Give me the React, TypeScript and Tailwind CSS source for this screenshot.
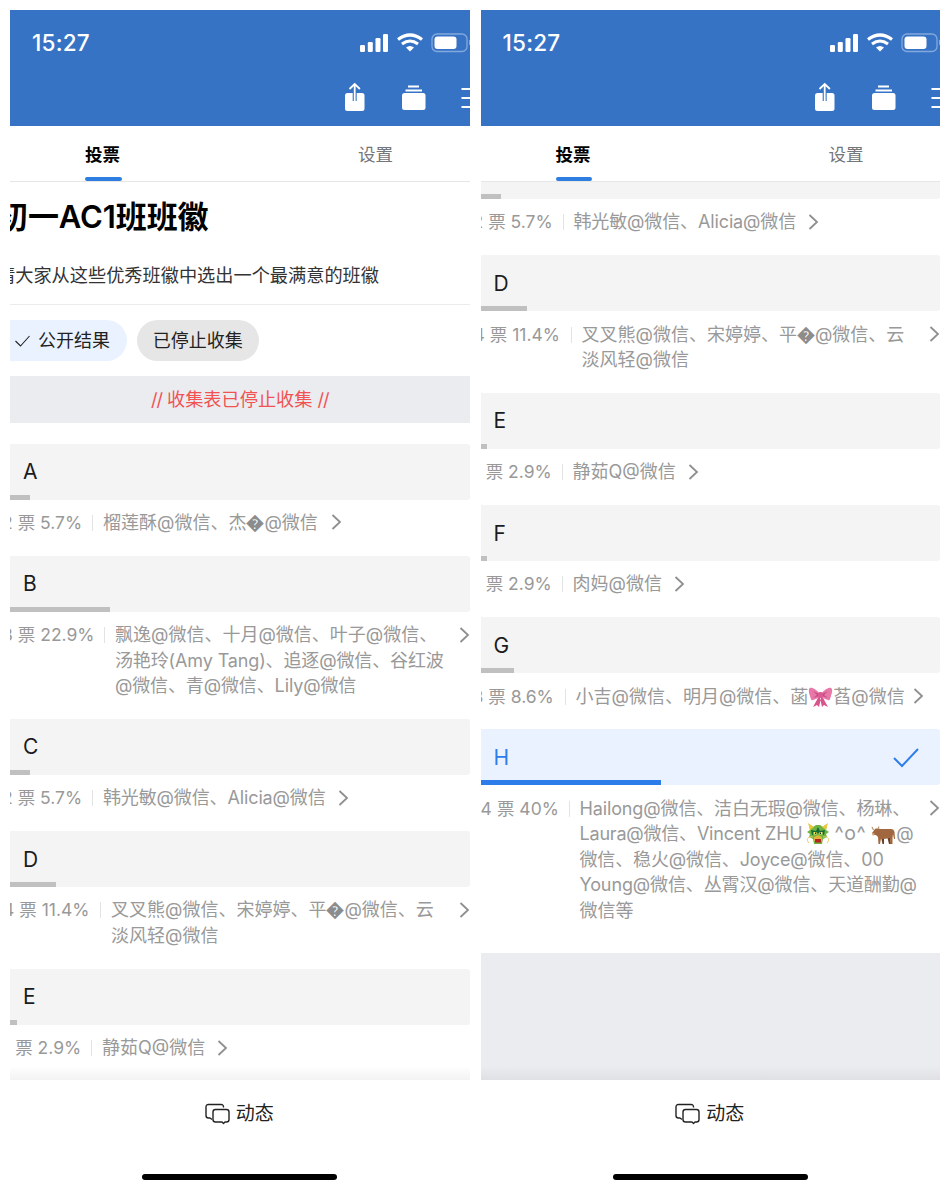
import React from "react";

type Vote = {
  label: string;
  bar: string;
  count: string;
  share: string;
  indent: string;
  column: string;
  lines: React.ReactNode[];
  chevron: string;
  selected?: boolean;
};

const Unknown = () => <span className="inline-block w-[18px] text-center text-[18px] leading-none font-black text-[#8c8c8c]">�</span>;

const Bow = () => (
  <svg className="inline-block h-[22px] w-[25px] align-[-5px]" viewBox="0 0 25 22">
    <path d="M11 10 5 21l4-2 2 2 2-9zM14 10l6 11-4-2-2 2-2-9z" fill="#d7558d" />
    <path d="M12 8C9 4 4 1 2 2S1 7 2 10s1 5 3 4 5-1 7-4zM13 8c3-4 8-7 10-6s1 5 0 8-1 5-3 4-5-1-7-4z" fill="#e878a8" />
    <path d="m11 8-6-3 4 4-4 3 6-2zM14 8l6-3-4 4 4 3-6-2z" fill="#c94a82" />
    <rect x="10" y="6" width="5" height="6" rx="2" fill="#d95b92" />
  </svg>
);

const Dragon = () => (
  <svg className="inline-block h-[22px] w-[24px] align-[-5px]" viewBox="0 0 24 22">
    <path d="M3 1 7 4l3-2h4l3 2 4-3-1 6 3 2-3 2 1 3-4 2-1 5H8l-1-5-4-2 1-3-3-2 3-2z" fill="#6fb441" />
    <path d="m2 0 2 7 4-3zM22 0l-2 7-4-3z" fill="#e9c83c" />
    <path d="m5 7 5 1 2-4 2 4 5-1-1 5-6-2-6 2z" fill="#176c35" />
    <path d="M7.5 9h3v2.500h-3zM13.5 9h3v2.500h-3z" fill="#f5e95b" />
    <path d="M9 9.5h1V11H9zM14 9.5h1V11h-1z" fill="#222" />
    <path d="m8 14 4-2 4 2v4H8z" fill="#e0b53a" />
    <path d="M9 16h6v3.500H9z" fill="#b9231f" />
    <path d="M7 14c-6-1-7 3-4 6M17 14c6-1 7 3 4 6" fill="none" stroke="#e3ce63" />
  </svg>
);

const Ox = () => (
  <svg className="inline-block h-[20px] w-[25px] align-[-5px]" viewBox="0 0 25 20">
    <path d="M16 11h3l1 8h-2zM10 12h3v7h-1.500z" fill="#6d4028" />
    <path d="M4 4c2-1 4 0 6 0h10c2 0 3 1 3.500 3l.5 7h-1l-1-5-.5 4v6h-2l-.5-6-6 1-3-.5-1 5.500H7.500L7 12 5 10H2L1 8z" fill="#a1683f" />
    <path d="M2.500 5 1 2M7 4l1-2.500" stroke="#b39a78" strokeWidth="1.2" />
    <path d="m1 8 2.500.5L3 10.500H1.500z" fill="#d8aa88" />
  </svg>
);

const voteA: Vote = {
  label: "A", bar: "w-[20px]", count: "2", share: "票 5.7%", indent: "-ml-[8px]", column: "w-[84px]",
  lines: [<>榴莲酥@微信、杰<Unknown />@微信</>], chevron: "ml-[8.5px] translate-x-[5px] -ml-px",
};
const voteB: Vote = {
  label: "B", bar: "w-[100px]", count: "8", share: "票 22.9%", indent: "-ml-[8px]", column: "w-[96px]",
  lines: ["飘逸@微信、十月@微信、叶子@微信、", "汤艳玲(Amy Tang)、追逐@微信、谷红波", "@微信、青@微信、Lily@微信"], chevron: "ml-auto mr-0",
};
const voteC: Vote = {
  label: "C", bar: "w-[20px]", count: "2", share: "票 5.7%", indent: "-ml-[8px]", column: "w-[84px]",
  lines: ["韩光敏@微信、Alicia@微信"], chevron: "ml-[12px]",
};
const voteD: Vote = {
  label: "D", bar: "w-[46px]", count: "4", share: "票 11.4%", indent: "-ml-[7px]", column: "w-[91px]",
  lines: [<>叉叉熊@微信、宋婷婷、平<Unknown />@微信、云</>, "淡风轻@微信"], chevron: "ml-auto mr-0",
};
const voteE: Vote = {
  label: "E", bar: "w-[6.5px]", count: "1", share: "票 2.9%", indent: "-ml-[7px]", column: "w-[82px]",
  lines: ["静茹Q@微信"], chevron: "ml-[12px]",
};
const voteF: Vote = { ...voteE, label: "F", lines: ["肉妈@微信"] };
const voteG: Vote = {
  label: "G", bar: "w-[33px]", count: "3", share: "票 8.6%", indent: "-ml-[8px]", column: "w-[86px]",
  lines: [<>小吉@微信、明月@微信、菡<Bow />萏@微信</>], chevron: "ml-[8.5px]",
};
const voteH: Vote = {
  label: "H", bar: "w-[180.5px]", count: "14", share: "票 40%", indent: "-ml-[7px]", column: "w-[89px]",
  lines: [
    "Hailong@微信、洁白无瑕@微信、杨琳、",
    <><span className="tracking-[-0.2px]">Laura@微信、Vincent ZHU</span><span className="ml-[3px]"><Dragon /></span><span className="ml-[5px] text-[19.5px] leading-none tracking-[0.5px]">^o^</span><span className="ml-[5px]"><Ox />@</span></>,
    "微信、稳火@微信、Joyce@微信、00",
    "Young@微信、丛霄汉@微信、天道酬勤@",
    "微信等",
  ],
  chevron: "ml-auto mr-0", selected: true,
};

const Chevron = ({ className }: { className: string }) => (
  <svg className={`mt-[4.500px] h-4 w-[11px] shrink-0 ${className}`} viewBox="0 0 11 16" fill="none" stroke="#8f8f8f" strokeWidth="1.8">
    <path d="m1.5 1 7.5 7-7.5 7" />
  </svg>
);

function Details({ vote }: { vote: Vote }) {
  return (
    <div className="flex items-start pt-[10.4px] pb-[20.3px] text-[17.5px] leading-[25.5px] whitespace-nowrap text-[#999]">
      <div className={`flex shrink-0 gap-[5px] ${vote.indent} ${vote.column}`}>
        <span>{vote.count}</span>
        <span>{vote.share}</span>
      </div>
      <span className="mt-[5px] ml-[6px] h-4 w-px shrink-0 bg-[#e3e3e3]" />
      <div className="ml-[10px] text-[18px]">
        {vote.lines.map((line, i) => (
          <div key={i} className={`h-[25.5px] ${typeof line === "string" && /[A-Za-z]{3}/.test(line) ? "tracking-[-0.13px]" : ""}`}>{line}</div>
        ))}
      </div>
      <Chevron className={vote.chevron} />
    </div>
  );
}

function Option({ vote }: { vote: Vote }) {
  return (
    <div>
      <div className={`flex h-14 flex-col justify-between rounded-r-[3px] ${vote.selected ? "bg-[#ebf2ff] text-[#2d7ee8]" : "bg-[#f4f4f4] text-[#1c1c1c]"}`}>
        <div className="flex h-[51px] items-center justify-between pt-[5.5px] pr-[21px] pl-[13px] text-[21px]">
          {vote.label}
          {vote.selected && (
            <svg className="h-5 w-[26px]" viewBox="0 0 26 20" fill="none" stroke="currentColor" strokeWidth="2"><path d="m1 10 8 8L25 1" /></svg>
          )}
        </div>
        <div className={`h-[5px] ${vote.bar} ${vote.selected ? "bg-[#2c7de9]" : "bg-[#c0c0c0]"}`} />
      </div>
      <Details vote={vote} />
    </div>
  );
}

function Header() {
  return (
    <header className="flex h-[116px] shrink-0 flex-col overflow-hidden bg-[#3773c5] text-white">
      <div className="flex h-[64px] items-center pl-[22px] text-[22.5px] font-medium tracking-[0.2px]">
        <span className="pt-[2px]">15:27</span>
        <svg className="ml-auto h-[24px] w-[112px] shrink-0" viewBox="0 0 112 24" fill="white">
          <rect x="2" y="15" width="5" height="7" rx="1.2" /><rect x="9.8" y="12" width="5" height="10" rx="1.2" />
          <rect x="17.5" y="8" width="5" height="14" rx="1.2" /><rect x="25" y="4" width="5" height="18" rx="1.2" />
          <path d="M40 9.5q12-9 24 0" fill="none" stroke="white" strokeWidth="3.2" />
          <path d="M44 14q8-6 16 0" fill="none" stroke="white" strokeWidth="3" />
          <path d="m48 17.5 4 4 4-4q-4-3-8 0" />
          <rect x="74" y="4" width="35" height="17.5" rx="5" fill="none" stroke="#82a9dd" strokeWidth="1.3" />
          <rect x="76.5" y="6.5" width="22" height="12.5" rx="3" />
          <path d="M111 10v5c1 0 2-1 2-2.5s-1-2.5-2-2.5" fill="#82a9dd" />
        </svg>
      </div>
      <div className="flex items-start pt-[7px]">
        <svg className="ml-auto h-[32px] w-[128px]" viewBox="0 0 128 32" fill="white">
          <rect x="3" y="12" width="19.5" height="18" rx="2.5" />
          <path d="M12.7 11v9" fill="none" stroke="#3773c5" strokeWidth="4" />
          <path d="M12.7 20V3M7.5 8l5.2-5 5.2 5" fill="none" stroke="white" strokeWidth="1.8" />
          <rect x="60" y="12" width="23.5" height="17" rx="2.5" />
          <path d="M63.5 9.5h16.500M66 5.500h11M119.500 8h13M119.500 17h13M119.500 26h13" stroke="white" strokeWidth="1.8" />
        </svg>
      </div>
    </header>
  );
}

function Tabs() {
  return (
    <nav className="flex h-[56px] shrink-0 items-stretch border-b border-[#e6e6e6] bg-white text-[17.5px]">
      <div className="ml-[75px] flex w-[36.5px] flex-col justify-between font-bold text-black">
        <span className="pt-[16px] leading-[26px] whitespace-nowrap">投票</span>
        <span className="h-1 rounded-full bg-[#2e7de1]" />
      </div>
      <span className="ml-[236.5px] pt-[16px] leading-[26px] text-[#73767a]">设置</span>
    </nav>
  );
}

function Footer() {
  return (
    <footer className="flex h-[110px] shrink-0 flex-col items-center bg-white">
      <div className="flex h-[67px] items-center gap-[6px] pr-px text-[19px] text-[#222]">
        <svg className="h-[22px] w-[25px]" viewBox="0 0 25 22" fill="none" stroke="currentColor" strokeWidth="1.4" strokeLinejoin="round">
          <path d="M18.5 4.5V4q0-2.5-2.5-2.5H3.5Q1 1.5 1 4v8.5q0 2.5 2.5 2.5H5l2 1.5" />
          <path d="M10.5 6.5h11q2.5 0 2.5 2.5v7.5q0 2.5-2.5 2.5H20l-1.5 1.5-1.5-1.5h-6.5Q8 19 8 16.5V9q0-2.5 2.5-2.5z" />
        </svg>
        <span className="pt-[2px]">动态</span>
      </div>
      <div className="mt-[26.5px] h-[6px] w-[195px] rounded-full bg-black" />
    </footer>
  );
}

function Screen({ children }: { children: React.ReactNode }) {
  return (
    <section className="flex h-[1180px] w-[459.5px] flex-col overflow-hidden bg-white">
      <Header />
      <Tabs />
      <div className="relative min-h-0 flex-1 overflow-hidden">
        {children}
        <div className="absolute inset-x-0 bottom-0 h-3.5 bg-linear-to-b from-transparent to-black/5" />
      </div>
      <Footer />
    </section>
  );
}

export default function App() {
  return (
    <main lang="zh-CN" className="flex h-[1200px] w-[950px] gap-[11px] overflow-hidden bg-white p-[10px] font-[Inter,'Noto_Sans_CJK_SC',sans-serif]">
      <Screen>
        <div className="border-b border-[#ececec]">
          <h1 className="-ml-[13px] pt-[12px] text-[31px] leading-[46px] font-semibold tracking-[-0.1px] whitespace-nowrap text-black">初一AC1班班徽</h1>
          <p className="-ml-[13px] h-[64px] pt-[22px] text-[18.2px] leading-[26px] whitespace-nowrap text-[#333]">请大家从这些优秀班徽中选出一个最满意的班徽</p>
        </div>
        <div className="flex gap-[10px] pt-[15px] text-[18px] text-[#222]">
          <span className="-ml-5 flex h-[41px] w-[136.5px] items-center rounded-full bg-[#ebf2ff] pl-[25px]">
            <svg className="mr-[8px] h-3 w-[15px]" viewBox="0 0 15 12" fill="none" stroke="currentColor" strokeWidth="1.1"><path d="m.5 6 5 5L14.5 1" /></svg>
            公开结果
          </span>
          <span className="flex h-[41px] w-[122.5px] items-center justify-center rounded-full bg-[#e6e6e6]">已停止收集</span>
        </div>
        <div className="mt-[15px] mb-[20.5px] flex h-[47px] items-center justify-center gap-[5px] bg-[#ebecf0] text-[18.2px] text-[#f15353]">
          <span className="tracking-[-1px]">//</span><span>收集表已停止收集</span><span className="tracking-[-1px]">//</span>
        </div>
        {[voteA, voteB, voteC, voteD, voteE].map((vote) => <Option key={vote.label} vote={vote} />)}
      </Screen>
      <Screen>
        <div className="-mt-[39px]">
          {[voteC, voteD, voteE, voteF, voteG, voteH].map((vote) => <Option key={vote.label} vote={vote} />)}
        </div>
        <div className="mt-[9.5px] h-[140px] bg-[#ebecf0]" />
      </Screen>
    </main>
  );
}
